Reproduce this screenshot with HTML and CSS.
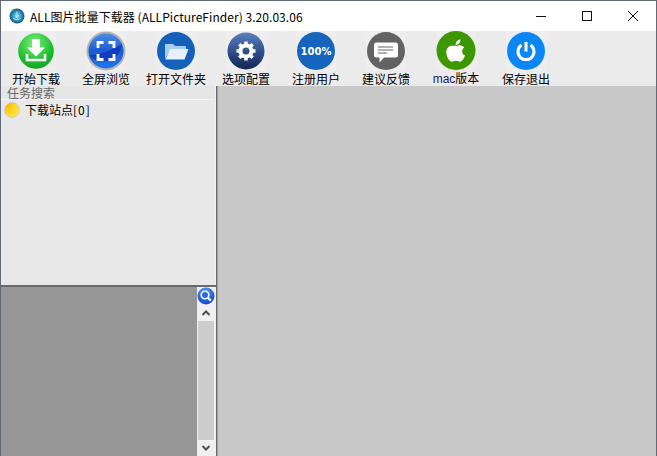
FILE: index.html
```html
<!DOCTYPE html>
<html lang="zh">
<head>
<meta charset="utf-8">
<title>ALL图片批量下载器</title>
<link rel="stylesheet" href="styles.css">
</head>
<body>
<div class="window">
  <header class="titlebar">
    <svg class="app-icon" viewBox="0 0 16 16"><defs><radialGradient id="ai" cx="50%" cy="50%" r="55%"><stop offset="0" stop-color="#7fd8f2"/><stop offset=".55" stop-color="#2e92c4"/><stop offset="1" stop-color="#12466e"/></radialGradient></defs><circle cx="8" cy="8" r="7.500" fill="url(#ai)"/><path d="M8 3.500v6M6 7l2 2.500L10 7M4.500 10.500c2 1.500 5 1.500 7 0" stroke="#dff1f8" stroke-width=".8" fill="none"/></svg>
    <span class="title">ALL图片批量下载器 (ALLPictureFinder) 3.20.03.06</span>
    <div class="controls">
      <svg class="ctl" viewBox="0 0 46 30"><path d="M18 15.500h10" stroke="#111" fill="none"/></svg>
      <svg class="ctl" viewBox="0 0 46 30"><rect x="18.500" y="10.500" width="9" height="9" stroke="#111" fill="none"/></svg>
      <svg class="ctl" viewBox="0 0 46 30"><path d="M18 10l10 10M28 10l-10 10" stroke="#111" fill="none"/></svg>
    </div>
  </header>
  <nav class="toolbar">
    <div class="tool"><svg viewBox="0 0 40 40"><defs><radialGradient id="g1" cx="45%" cy="30%" r="75%"><stop offset="0" stop-color="#7df07a"/><stop offset=".6" stop-color="#25c235"/><stop offset="1" stop-color="#0a9a20"/></radialGradient></defs><circle cx="20" cy="20" r="18.500" fill="url(#g1)" stroke="#e4ece4" stroke-width="1.500"/><path d="M16 8h8v8.500h5L20 25.500l-9-9h5z" fill="#fff"/><path d="M11 23v6h18v-6" stroke="#fff" stroke-width="2.500" fill="none"/></svg><span>开始下载</span></div>
    <div class="tool"><svg viewBox="0 0 40 40"><defs><linearGradient id="g2" x1="0" y1="0" x2="0" y2="1"><stop offset="0" stop-color="#4f8fe6"/><stop offset=".5" stop-color="#1c5bd0"/><stop offset="1" stop-color="#1f78f5"/></linearGradient></defs><circle cx="20" cy="20" r="18.500" fill="url(#g2)" stroke="#b4b4b4" stroke-width="2"/><path d="M3 24c8 0 20-3 33-11-1 8-4 14-16 17-8 1-14-2-17-6z" fill="#0830b8" opacity=".7"/><path d="M12 17v-5.500h5.500M22.500 11.500H28V17M28 23v5.500h-5.500M17.500 28.500H12V23" stroke="#fff" stroke-width="2.800" fill="none"/></svg><span>全屏浏览</span></div>
    <div class="tool"><svg viewBox="0 0 40 40"><circle cx="20" cy="20" r="19" fill="#1560b8"/><path d="M9 28V14a1 1 0 0 1 1-1h7l2 2h10a1 1 0 0 1 1 1v3H14z" fill="#a8cdf0"/><path d="M9.500 28.500l4.500-10.500h18.500l-4 10.500z" fill="#e6f1fb"/></svg><span>打开文件夹</span></div>
    <div class="tool"><svg viewBox="0 0 40 40"><defs><linearGradient id="g4" x1="0" y1="0" x2="0" y2="1"><stop offset="0" stop-color="#5a7fc0"/><stop offset=".7" stop-color="#223f78"/><stop offset="1" stop-color="#14284f"/></linearGradient></defs><circle cx="20" cy="20" r="18.500" fill="url(#g4)"/><circle cx="20" cy="20" r="5.500" fill="none" stroke="#fff" stroke-width="4"/><path d="M20 10.500v4M20 25.500v4M10.500 20h4M25.500 20h4M13.300 13.300l2.800 2.800M23.900 23.900l2.800 2.800M26.700 13.300l-2.800 2.800M16.100 23.900l-2.800 2.800" stroke="#fff" stroke-width="3.500"/></svg><span>选项配置</span></div>
    <div class="tool"><svg viewBox="0 0 40 40"><circle cx="20" cy="20" r="19" fill="#1564bd"/><text x="20" y="23.500" text-anchor="middle" class="pct">100%</text></svg><span>注册用户</span></div>
    <div class="tool"><svg viewBox="0 0 40 40"><circle cx="20" cy="20" r="19" fill="#636363"/><path d="M10.500 11.500h19a2.500 2.500 0 0 1 2.500 2.500v10a2.500 2.500 0 0 1-2.500 2.500H18l-4.500 5v-5h-3A2.500 2.500 0 0 1 8 24V14a2.500 2.500 0 0 1 2.500-2.500z" fill="#fff"/><path d="M12 16h15M12 19h15M12 22h9" stroke="#666" stroke-width="1.200"/></svg><span>建议反馈</span></div>
    <div class="tool"><svg viewBox="0 0 40 40"><circle cx="20" cy="20" r="20" fill="#3c9700"/><path d="M20 16c1.500-.8 3.300-1.500 5-1.200 1.500.3 2.800 1.100 3.500 2.300-3.300 2-2.800 6.700.8 8.100-.8 2.500-3 6.300-5.300 6.300-1.500 0-2-1-4-1s-2.700 1-4 1c-3 0-6-5.800-6-9.700 0-4.300 2.900-6.800 5.800-6.800 1.600 0 2.800.5 4.200 0z" fill="#fff"/><path d="M19.500 14.500c0-3 2-5.500 5-6 .2 3.200-2 5.800-5 6z" fill="#fff"/></svg><span class="mac"><i>mac</i>版本</span></div>
    <div class="tool"><svg viewBox="0 0 40 40"><circle cx="20" cy="20" r="19" fill="#0a87f7"/><path d="M15.500 14a8 8 0 1 0 9 0" stroke="#fff" stroke-width="3" fill="none"/><path d="M20 11v9.500" stroke="#fff" stroke-width="3"/></svg><span>保存退出</span></div>
  </nav>
  <main class="content">
    <aside class="side">
      <section class="tasks">
        <div class="search">任务搜索</div>
        <div class="site"><span class="dot"></span><span>下载站点<b class="count">[0]</b></span></div>
      </section>
      <section class="preview">
        <div class="canvas"></div>
        <div class="scroll">
          <svg class="zoom" viewBox="0 0 18 18"><defs><radialGradient id="gz" cx="45%" cy="25%" r="80%"><stop offset="0" stop-color="#5b9bff"/><stop offset="1" stop-color="#0b3fd0"/></radialGradient></defs><circle cx="9" cy="9" r="8.500" fill="url(#gz)"/><circle cx="8" cy="8" r="3.800" fill="#2a66e0" stroke="#fff" stroke-width="1.600"/><path d="M10.800 10.800l3 2.800" stroke="#fff" stroke-width="2.200"/></svg>
          <svg class="arrow" viewBox="0 0 18 16"><path d="M5.500 10L9 6.500l3.500 3.500" stroke="#505050" stroke-width="2" fill="none"/></svg>
          <div class="track"><div class="thumb"></div></div>
          <svg class="arrow" viewBox="0 0 18 16"><path d="M5.500 6L9 9.500 12.500 6" stroke="#505050" stroke-width="2" fill="none"/></svg>
        </div>
      </section>
    </aside>
    <div class="viewer"></div>
  </main>
</div>
</body>
</html>
```

FILE: styles.css
```css
* { box-sizing: border-box; }
html, body { margin: 0; height: 100%; overflow: hidden; }
body { font-family: "Noto Sans CJK SC", "Liberation Sans", sans-serif; color: #000; }
.window {
  width: 657px; height: 456px;
  display: flex; flex-direction: column;
  border: 1px solid #5f6b78; border-bottom: 0;
  background: #f0f0f0;
}
.titlebar { height: 30px; background: #fff; display: flex; align-items: center; padding-left: 8px; flex: none; }
.app-icon { width: 16px; height: 16px; flex: none; }
.title { margin-left: 5px; font-size: 12px; letter-spacing: .05px; font-family: "Noto Sans CJK SC", "Open Sans", sans-serif; white-space: nowrap; }
.controls { margin-left: auto; display: flex; }
.ctl { width: 46px; height: 30px; display: block; }
.toolbar { height: 55px; background: #ebebeb; display: flex; flex: none; }
.tool { width: 70px; display: flex; flex-direction: column; align-items: center; flex: none; }
.tool svg { width: 40px; height: 40px; display: block; background: #eeeeee; }
.tool span { font-size: 12px; line-height: 14px; margin-top: 1px; white-space: nowrap; }
.pct { font: bold 10px "DejaVu Sans", sans-serif; fill: #fff; }
.mac i { font-style: normal; color: #1a1a6e; font-family: "Liberation Sans", sans-serif; }
.content { flex: 1; display: flex; min-height: 0; }
.side { width: 216px; display: flex; flex-direction: column; border-right: 1px solid #6a6a6a; flex: none; background: #f0f0f0; }
.tasks { height: 199px; background: #e8e8e8; border-right: 1px solid #f2f2f2; flex: none; }
.search { height: 14px; font-size: 12px; line-height: 14px; color: #666; padding-left: 6px; border-bottom: 1px solid #f4f4f4; background: #e6e6e6; }
.site { display: flex; align-items: center; gap: 5px; padding-left: 3px; font-size: 12px; height: 19px; }
.count { font-weight: 400; letter-spacing: 1px; }
.dot { width: 16px; height: 16px; border-radius: 50%; background: linear-gradient(135deg, #f5a800, #ffd21a 40%, #ffe94f); border: 1px solid #cfcfcf; flex: none; }
.preview { flex: 1; display: flex; border-top: 2px solid #6a6a6a; min-height: 0; }
.canvas { width: 196px; background: #969696; flex: none; }
.scroll { width: 18px; background: #f0f0f0; display: flex; flex-direction: column; align-items: center; flex: none; }
.zoom { width: 18px; height: 18px; display: block; flex: none; }
.arrow { width: 18px; height: 16px; display: block; flex: none; }
.track { flex: 1; width: 16px; }
.thumb { height: 100%; background: #cdcdcd; }
.viewer { flex: 1; background: #c8c8c8; border-left: 1px solid #a0a0a0; }
```
